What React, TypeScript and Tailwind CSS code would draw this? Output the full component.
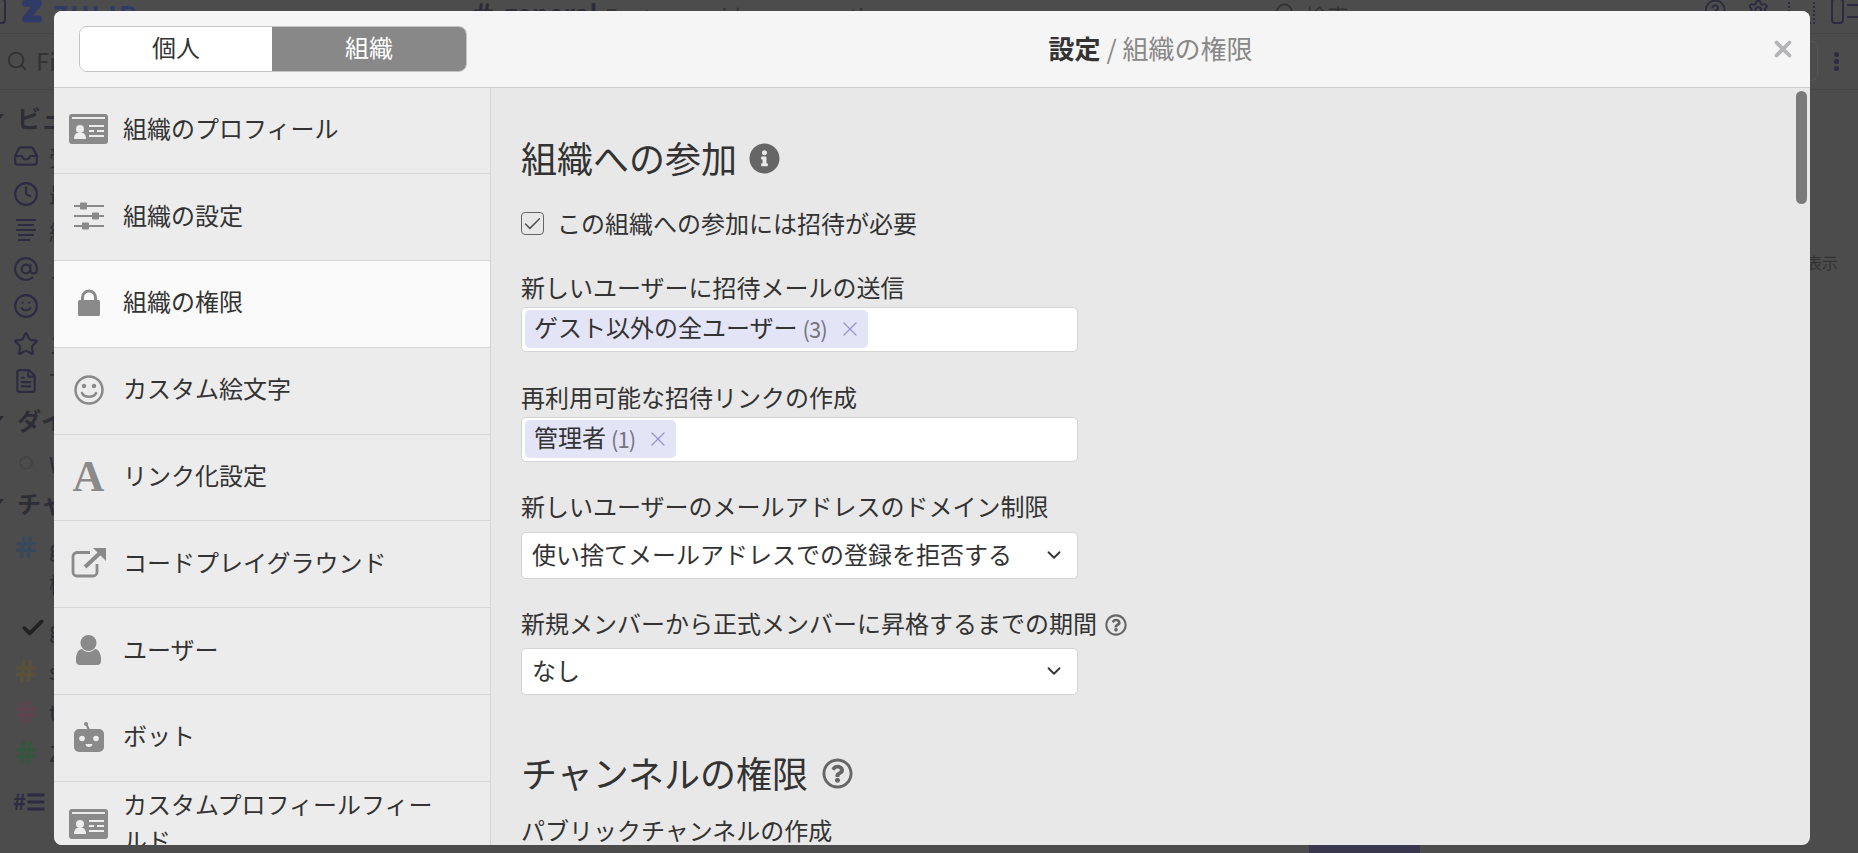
import * as React from "react";
import { AtSign, Check, ChevronDown, CircleHelp, Clock, FileText, Hash, Inbox, Search, Settings, Smile, Star, X } from "lucide-react";
import { FaInfoCircle, FaRegQuestionCircle } from "react-icons/fa";

const GRAY = "#8a8a8a";

function IdCardIcon() {
    return (
        <svg width="39" height="30" viewBox="0 0 39 30">
            <rect width="39" height="30" rx="3" fill={GRAY} />
            <rect x="3" y="3" width="33" height="2" fill="#ececec" />
            <circle cx="11" cy="15" r="4" fill="#ececec" />
            <path d="M5 25c0-4 2-6 3.500-6h5c1.500 0 3.500 2 3.500 6z" fill="#ececec" />
            <rect x="20" y="11" width="15" height="2" fill="#ececec" />
            <rect x="20" y="16" width="5" height="2" fill="#ececec" />
            <rect x="28" y="16" width="7" height="2" fill="#ececec" />
            <rect x="20" y="21" width="15" height="2" fill="#ececec" />
        </svg>
    );
}

function SlidersIcon() {
    return (
        <svg width="30" height="28" viewBox="0 0 30 28" fill={GRAY}>
            <rect y="3" width="30" height="2" />
            <rect y="13" width="30" height="2" />
            <rect y="23" width="30" height="2" />
            <rect x="6" y="0.500" width="7" height="7" rx="1" />
            <rect x="18" y="10.500" width="7" height="7" rx="1" />
            <rect x="8" y="20.500" width="7" height="7" rx="1" />
        </svg>
    );
}

function LockIcon() {
    return (
        <svg width="22" height="27" viewBox="0 0 22 27">
            <path d="M4.500 13V8.500a6.500 6.500 0 0 1 13 0V13" fill="none" stroke={GRAY} strokeWidth="3" />
            <rect y="11" width="22" height="16" rx="1.500" fill={GRAY} />
        </svg>
    );
}

function SmileIcon() {
    return (
        <svg width="30" height="30" viewBox="0 0 30 30" fill="none" stroke={GRAY} strokeWidth="2.500">
            <circle cx="15" cy="15" r="13.500" />
            <circle cx="10" cy="11" r="2.200" fill={GRAY} stroke="none" />
            <circle cx="20" cy="11" r="2.200" fill={GRAY} stroke="none" />
            <path d="M8 18c2 5 12 5 14 0" strokeLinecap="round" />
        </svg>
    );
}

function ExternalIcon() {
    return (
        <svg width="35" height="30" viewBox="0 0 35 30" fill="none" stroke={GRAY}>
            <path d="M19 4.500H6a4 4 0 0 0-4 4V24a4 4 0 0 0 4 4h16a4 4 0 0 0 4-4v-8" strokeWidth="2.800" />
            <path d="M14 19 29 5" strokeWidth="4" />
            <path d="M22 0h13v13z" fill={GRAY} stroke="none" />
        </svg>
    );
}

function UserIcon() {
    return (
        <svg width="25" height="30" viewBox="0 0 25 30" fill={GRAY}>
            <circle cx="12.500" cy="8" r="8" />
            <path d="M0 24c0-6 3-10 6-10 2 2 4 3 6.500 3s4.500-1 6.500-3c3 0 6 4 6 10v2a4 4 0 0 1-4 4H4a4 4 0 0 1-4-4z" />
        </svg>
    );
}

function RobotIcon() {
    return (
        <svg width="30" height="30" viewBox="0 0 30 30">
            <path d="M12 1.500 15 8" stroke={GRAY} strokeWidth="2" />
            <circle cx="12" cy="2" r="2" fill={GRAY} />
            <rect y="7" width="30" height="23" rx="5" fill={GRAY} />
            <circle cx="8" cy="16.500" r="2.800" fill="#ececec" />
            <circle cx="22" cy="16.500" r="2.800" fill="#ececec" />
            <path d="M11.500 22h7c0 4-7 4-7 0z" fill="#ececec" />
        </svg>
    );
}

function ZulipLogo() {
    return (
        <svg width="20" height="27" viewBox="0 0 20 27" fill="none" stroke="#2f3a66" strokeWidth="7" strokeLinecap="round" strokeLinejoin="round">
            <path d="M3.500 7.500H16.500L3.500 23H16.500" />
        </svg>
    );
}

function FeedLinesIcon() {
    return (
        <svg width="20" height="24" viewBox="0 0 20 24" fill="#2c2b42" className="mx-[3px] shrink-0">
            <rect width="20" height="2" />
            <rect x="2" y="5" width="16" height="2" />
            <rect y="10" width="20" height="2" />
            <rect x="2" y="15" width="16" height="2" />
            <rect x="2" y="20" width="12" height="2" />
        </svg>
    );
}

const NAV_ITEMS = [
    { label: "組織のプロフィール", icon: <IdCardIcon /> },
    { label: "組織の設定", icon: <SlidersIcon /> },
    { label: "組織の権限", icon: <LockIcon />, active: true },
    { label: "カスタム絵文字", icon: <SmileIcon /> },
    { label: "リンク化設定", icon: <span className="font-['Liberation_Serif',serif] font-bold text-[44px] leading-none text-[#8a8a8a]">A</span> },
    { label: "コードプレイグラウンド", icon: <ExternalIcon /> },
    { label: "ユーザー", icon: <UserIcon /> },
    { label: "ボット", icon: <RobotIcon /> },
    { label: "カスタムプロフィールフィールド", icon: <IdCardIcon /> },
];

function Pill({ name, count }: { name: string; count: number }) {
    return (
        <div className="h-[38px] flex items-center pl-[9px] pr-[6px] rounded-[5px] bg-[#e4e4f7] text-[24px] text-[#333]">
            <span className="mt-[-4px]">{name}</span>
            <span className="ml-[5px] mt-[-2px] text-[22px] tracking-[-1px] text-[#75757f]">({count})</span>
            <X className="ml-[11px] size-[24px] text-[#9494de]" strokeWidth={1.300} />
        </div>
    );
}

function PillField({ label, children }: { label: string; children: React.ReactNode }) {
    return (
        <div>
            <div className="h-[36px] leading-[32px] text-[24px]">{label}</div>
            <div className="w-[557px] h-[45px] flex items-center pl-[3px] bg-white rounded-[5px] border border-[#d4d4d4]">{children}</div>
        </div>
    );
}

function SelectField({ label, value, help }: { label: string; value: string; help?: boolean }) {
    return (
        <div>
            <div className={`h-[36px] text-[24px] flex items-start ${help ? "leading-[34px]" : "leading-[32px]"}`}>
                {label}
                {help && <FaRegQuestionCircle className="ml-[8px] mt-[8px] size-[22px] text-[#666]" />}
            </div>
            <div className="mt-[6px] w-[557px] h-[47px] flex items-center justify-between pl-[10px] pr-[12px] bg-white rounded-[5px] border border-[#d4d4d4] text-[24px]">
                <span className="mt-[-3px]">{value}</span>
                <ChevronDown className="size-[22px] text-[#333]" strokeWidth={2} />
            </div>
        </div>
    );
}

function BgRow({ h, children }: { h: string; children: React.ReactNode }) {
    return <div className={`${h} flex items-center pl-[13px] gap-[10px] whitespace-nowrap text-[22px] text-[#2d2d35]`}>{children}</div>;
}

function BgSection({ h, label }: { h: string; label: string }) {
    return (
        <BgRow h={h}>
            <div className="ml-[-21px] w-0 h-0 border-x-[6px] border-t-[8px] border-x-transparent border-t-[#2d2d35]" />
            <span className="pl-[3px] text-[24px] font-bold">{label}</span>
        </BgRow>
    );
}

function BackgroundApp() {
    const iconClass = "size-[26px] shrink-0 text-[#2c2b42]";
    const hashClass = "size-[26px] shrink-0";
    return (
        <div className="h-full flex flex-col bg-[#4c4c4c]">
            <div className="h-[34px] shrink-0 flex items-start border-b border-[#454545] whitespace-nowrap text-[#2d2d35]">
                <div className="ml-[-9px] mt-[-2px] w-[16px] h-[26px] rounded-[4px] border-2 border-[#2c2b42]" />
                <div className="ml-[16px] mt-[-4px]"><ZulipLogo /></div>
                <span className="ml-[10px] mt-[-4px] text-[26px] leading-[36px] font-bold tracking-[2px] text-[#2f3a66]">ZULIP</span>
                <Hash className="ml-[333px] mt-[1px] size-[26px]" strokeWidth={3} />
                <span className="ml-[6px] mt-[-5px] text-[26px] leading-[36px] font-bold">general</span>
                <span className="ml-[7px] mt-[-3px] text-[22px] leading-[36px] text-[#333]">For team-wide conversations</span>
                <Search className="ml-[373px] mt-[1px] size-[24px] text-[#333]" />
                <span className="ml-[8px] mt-[-3px] text-[22px] leading-[36px] text-[#333]">検索</span>
                <CircleHelp className="ml-[355px] mt-[-2px] size-[24px] text-[#2c2b42]" />
                <Settings className="ml-[21px] mt-[-2px] size-[24px] text-[#2c2b42]" />
                <div className="ml-[18px] mt-[-2px] w-[29px] h-[26px] border-2 border-dotted border-[#2c2b42]" />
                <div className="ml-[16px] mt-[-2px] w-[13px] h-[26px] rounded-[4px] border-2 border-[#2c2b42]" />
                <div className="ml-[3px] mt-[4px] w-[12px] h-[14px] border-y-2 border-[#2c2b42]" />
            </div>
            <div className="h-[57px] shrink-0 flex items-center mt-[-1px] border-b border-[#454545] pl-[6px] gap-[8px] text-[24px] text-[#333]">
                <Search className="size-[22px] text-[#333]" />
                Filter
                <div className="ml-auto w-[100px] h-[40px] rounded-[6px] border border-[#555]" />
                <div className="ml-[8px] mr-[19px] flex flex-col gap-[2px]">
                    <div className="size-[5px] rounded-full bg-[#2c2b42]" />
                    <div className="size-[5px] rounded-full bg-[#2c2b42]" />
                    <div className="size-[5px] rounded-full bg-[#2c2b42]" />
                </div>
            </div>
            <div className="h-[47.500px] pt-[8px] shrink-0"><BgSection h="h-[39.500px]" label="ビュー" /></div>
            <BgRow h="h-[37.5px]"><Inbox className={iconClass} />受信トレイ</BgRow>
            <BgRow h="h-[37.5px]"><Clock className={iconClass} />最近</BgRow>
            <BgRow h="h-[37.5px]"><FeedLinesIcon />組み合わせ</BgRow>
            <BgRow h="h-[37.5px]"><AtSign className={iconClass} />メンション</BgRow>
            <BgRow h="h-[37.5px]"><Smile className={iconClass} />リアクション</BgRow>
            <BgRow h="h-[37.5px]"><Star className={iconClass} />スター</BgRow>
            <BgRow h="h-[37.5px]"><FileText className={iconClass} />下書き</BgRow>
            <BgSection h="h-[40px]" label="ダイレクト" />
            <BgRow h="h-[46px]"><div className="ml-[6px] mr-[6px] size-[14px] rounded-full border-2 border-[#444]" />Welcome</BgRow>
            <BgSection h="h-[34px]" label="チャンネル" />
            <BgRow h="h-[54px]"><Hash className={`${hashClass} text-[#37495a]`} strokeWidth={3} />general</BgRow>
            <BgRow h="h-[18px]"><span className="ml-[36px]">桁</span></BgRow>
            <div className="h-[58px] pt-[14px]">
                <BgRow h="h-[44px]"><Check className="size-[26px] ml-[7px] mr-[-7px] text-[#222]" strokeWidth={3.500} />general</BgRow>
            </div>
            <BgRow h="h-[41px]"><Hash className={`${hashClass} text-[#5a5238]`} strokeWidth={3} />sandbox</BgRow>
            <BgRow h="h-[41px]"><Hash className={`${hashClass} text-[#5f4450]`} strokeWidth={3} />test</BgRow>
            <BgRow h="h-[41px]"><Hash className={`${hashClass} text-[#35563f]`} strokeWidth={3} />Zulip</BgRow>
            <BgRow h="h-[54px]"><span className="font-bold text-[#2c2b42]">#☰</span>個</BgRow>
        </div>
    );
}

export default function App() {
    return (
        <div className="relative h-screen w-screen overflow-hidden font-['Noto_Sans_CJK_JP','Noto_Sans',sans-serif] text-[#333]">
            <BackgroundApp />

            {/* right edge of the dimmed page */}
            <div className="absolute right-[20px] top-[250px] text-[16px] text-[#333]">表示</div>
            <div className="absolute left-[1309px] bottom-0 w-[111px] h-[8px] bg-[#38374d]" />

            {/* Settings modal */}
            <div className="absolute left-[54px] top-[11px] w-[1756px] h-[834px] rounded-[8px] overflow-hidden flex flex-col bg-[#e8e8e8]">
                <div className="relative h-[76.500px] shrink-0 flex items-center bg-[#f5f5f5] border-b border-[#cfcfcf]">
                    <div className="ml-[25px] w-[388px] h-[46px] flex rounded-[8px] overflow-hidden border border-[#c4c4c4] text-[24px] leading-none">
                        <div className="w-[192px] pb-[4px] flex items-center justify-center bg-white">個人</div>
                        <div className="flex-1 pb-[4px] flex items-center justify-center bg-[#888] text-white">組織</div>
                    </div>
                    <div className="w-[24px] shrink-0" />
                    <div className="flex-1 pb-[2px] text-center text-[26px] text-[#888]">
                        <span className="font-bold text-[#333]">設定</span> / 組織の権限
                    </div>
                    <X className="absolute right-[14px] top-[25px] size-[26px] text-[#b4b4b8]" strokeWidth={3.500} />
                </div>

                <div className="flex-1 flex min-h-0">
                    <div className="w-[437px] shrink-0 bg-[#ececec] border-r border-[#d4d4d4]">
                        {NAV_ITEMS.map((item) => (
                            <div
                                key={item.label}
                                className={`min-h-[86.800px] flex items-center border-b border-[#d6d6d6] pr-[40px] text-[24px] leading-[36px] ${item.active ? "bg-[#fafafa]" : ""}`}
                            >
                                <div className="w-[69px] mt-[-2px] shrink-0 flex justify-center">{item.icon}</div>
                                <div className="mt-[-5px]">{item.label}</div>
                            </div>
                        ))}
                    </div>

                    <div className="relative flex-1 pl-[30px] pt-[47px] overflow-hidden">
                        <h2 className="flex items-center text-[36px] leading-[44px]">
                            組織への参加
                            <FaInfoCircle className="ml-[12px] mt-[4px] size-[31px] text-[#666]" />
                        </h2>
                        <label className="mt-[29px] h-[30px] flex items-center text-[24px]">
                            <span className="size-[23px] mr-[13px] mt-[2px] flex items-center justify-center rounded-[4px] border border-[#666]">
                                <Check className="size-[22px] text-[#555]" strokeWidth={1.800} />
                            </span>
                            この組織への参加には招待が必要
                        </label>
                        <div className="mt-[33px]">
                            <PillField label="新しいユーザーに招待メールの送信"><Pill name="ゲスト以外の全ユーザー" count={3} /></PillField>
                        </div>
                        <div className="mt-[29px]">
                            <PillField label="再利用可能な招待リンクの作成"><Pill name="管理者" count={1} /></PillField>
                        </div>
                        <div className="mt-[28px]">
                            <SelectField label="新しいユーザーのメールアドレスのドメイン制限" value="使い捨てメールアドレスでの登録を拒否する" />
                        </div>
                        <div className="mt-[27px]">
                            <SelectField label="新規メンバーから正式メンバーに昇格するまでの期間" value="なし" help />
                        </div>
                        <h2 className="mt-[55px] flex items-center text-[36px] leading-[44px]">
                            チャンネルの権限
                            <FaRegQuestionCircle className="ml-[14px] mt-[4px] size-[31px] text-[#666]" />
                        </h2>
                        <div className="mt-[19px] text-[24px] leading-[34px]">パブリックチャンネルの作成</div>

                        <div className="absolute right-[3px] top-[3px] w-[11px] h-[113px] rounded-full bg-[#7a7a7a]" />
                    </div>
                </div>
            </div>
        </div>
    );
}
